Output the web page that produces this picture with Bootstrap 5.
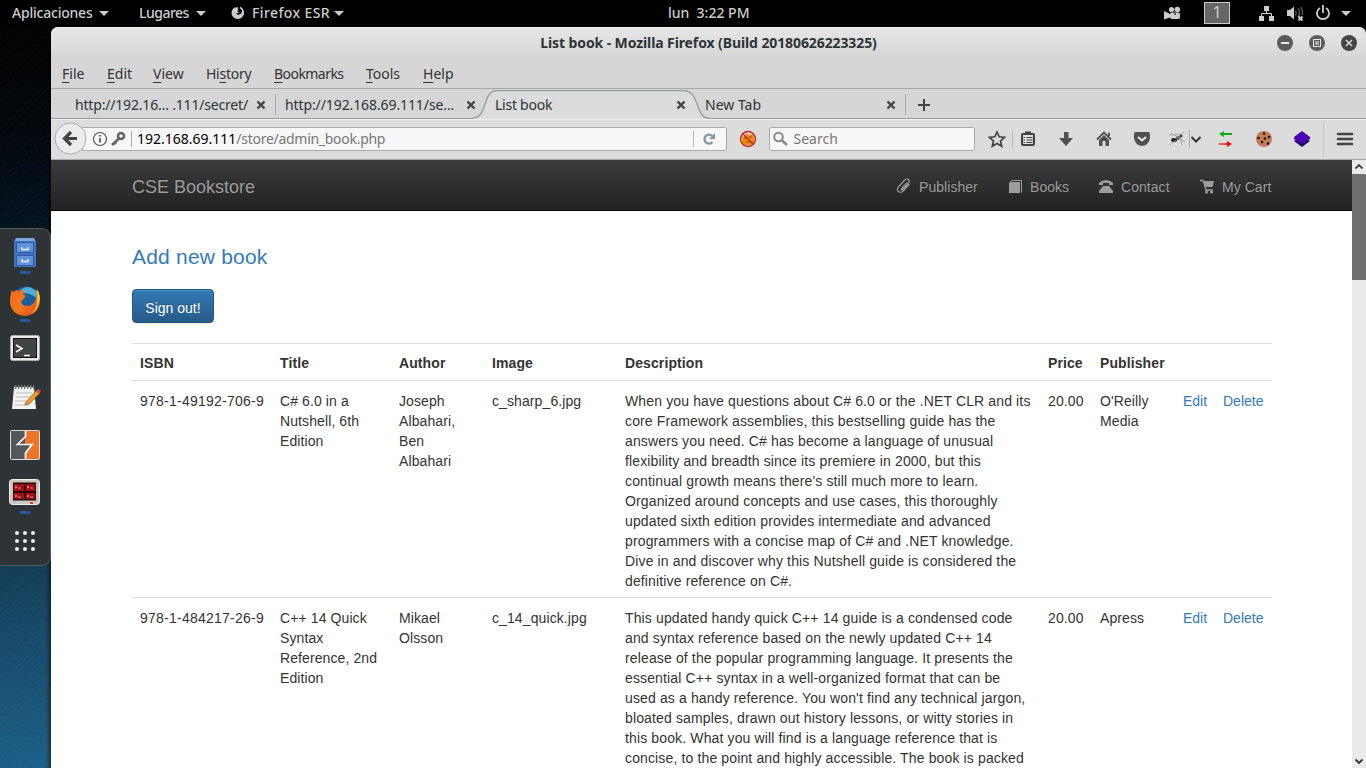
<!DOCTYPE html>
<html lang="en">
<head>
<meta charset="utf-8">
<title>List book</title>
<link href="https://cdn.jsdelivr.net/npm/bootstrap@5.3.0/dist/css/bootstrap.min.css" rel="stylesheet">
<style>
html,body{height:768px;width:1366px;overflow:hidden}
body{background:#000;font:14px/20px "Noto Sans","Open Sans",sans-serif;color:#2e3436;white-space:nowrap}
svg{display:block;flex:none}
.topbar{height:27px;background:#000;color:#ccc;font-weight:500}
.topbar span{line-height:26px}
.topbar .t1{width:82px;margin-left:12px;letter-spacing:-.22px}
.topbar .t2{width:52px;margin-left:29px;letter-spacing:-.5px}
.topbar .t3{width:78px;margin-left:7px;letter-spacing:.4px}
.clock{left:668px;top:0}
.ws{width:26px;height:22px;background:#666;border:1px solid #ccc;color:#ccc;font-size:16px;line-height:19px!important;text-align:center;font-weight:400}
.desk{height:741px}
.side{width:51px;background:linear-gradient(90deg,transparent 90%,rgba(0,0,0,.45)),repeating-linear-gradient(135deg,rgba(255,255,255,.02) 0 2px,transparent 2px 4px),linear-gradient(172deg,#000 0,#01060c 15%,#03121f 27%,#123c56 73%,#17496a 82%,#195578 92%,#1b5f88 100%);padding-top:201px}
.dockbox{height:338px;background:#2e3436;border:1px solid #555a5b;border-left:0;border-radius:0 9px 9px 0}
.win{width:1315px;border-radius:7px 7px 0 0;overflow:hidden;background:#d6d6d6}
.titlebar{height:31px;background:linear-gradient(#e6e6e6,#d6d6d6);border-top:1px solid #f6f6f6;font-weight:700}
.titlebar .cap{width:1315px;text-align:center;line-height:30px;letter-spacing:-.1px}
.winbtns{right:0;top:0}
.menus{height:31px;border-bottom:1px solid #a9a9a9;padding-left:11px;color:#333}
.menus span{line-height:32px}
.menus u{text-underline-offset:3px}
.tabs{height:30px;border-bottom:1px solid #999;padding-left:14px}
.tb-tab{width:210px;padding-left:10px;line-height:31px;position:relative}
.tb-tab>svg.x{position:absolute;left:191px;top:11px}
.tb-tab>svg.shape{position:absolute;left:-12px;top:1px}
.tb-tab>span{position:relative}
.tb-tab.sep::before{content:"";position:absolute;left:0;top:5px;height:21px;border-left:1px solid #aaa}
.tools{height:41px;background:#dcdcdc;border-top:1px solid #efefef;border-bottom:1px solid #a9a9a9;padding-bottom:2px}
.back{margin-left:3px;position:relative;z-index:1}
.url{margin-left:-5px;width:647px;height:24px;border:1px solid #aaa;border-radius:0 2px 2px 0;background:#f7f7f7}
.url .rest{color:#777;letter-spacing:-.28px}
.seek{width:206px;height:24px;border:1px solid #aaa;border-radius:2px;background:#f7f7f7;color:#777}
.view{height:608px;background:#fff}
.page{width:1301px;font-family:"Liberation Sans",Arial,sans-serif;color:#333;overflow:hidden}
.cse{height:51px;background:linear-gradient(#3c3c3c,#222);border-bottom:1px solid #080808;color:#9d9d9d;padding:0 80px 0 81px;text-shadow:0 -1px 0 rgba(0,0,0,.25)}
.cse .brand{font-size:18px;line-height:54px}
.cse .it{line-height:54px;letter-spacing:.05px}
.main{padding:0 80px 0 81px}
.addnew{font-size:21px;line-height:30px;margin-top:31px;color:#337ab7;letter-spacing:.2px}
.out{margin-top:17px;width:82px;height:34px;padding:4px 0 0;font-size:14px;line-height:29px;color:#fff;border:1px solid #245580;border-radius:4px;background:linear-gradient(#337ab7,#265a88);text-shadow:0 -1px 0 rgba(0,0,0,.2);box-shadow:inset 0 1px 0 rgba(255,255,255,.15),0 1px 1px rgba(0,0,0,.075)}
.books{margin-top:20px;width:1140px;table-layout:fixed;border-collapse:collapse}
.books td,.books th{padding:10px 0 6px 8px;border-top:1px solid #ddd;vertical-align:top;line-height:20px;letter-spacing:.1px}
.books th{padding:9px 0 7px 8px}
.books td:first-child{letter-spacing:.24px}
.books td:nth-child(5){letter-spacing:.135px}
.books td:nth-child(8),.books td:nth-child(9){letter-spacing:0}
.books a{color:#337ab7;text-decoration:none}
.scroller{width:14px;background:#ebebeb}
.thumb{height:106px;background:#707070}
</style>
</head>
<body>
<header class="topbar d-flex align-items-start position-relative">
  <span class="t1">Aplicaciones</span>
  <svg width="12" height="27" style="margin-left:4px"><path d="M1 11h10l-5 5z" fill="#ccc"/></svg>
  <span class="t2">Lugares</span>
  <svg width="12" height="27" style="margin-left:4px"><path d="M1 11h10l-5 5z" fill="#ccc"/></svg>
  <svg width="14" height="27" style="margin-left:24px" viewBox="0 0 14 27"><path d="M4 7.800A6 6 0 0 0 1.500 12.500a5.500 5.500 0 0 0 11 .5c0-3-1-4.500-3-5.500 1.500 1.500 2 3 1.200 5-1 2.500-4.500 3-5.700.7l2 .1 1-1.300-2-.7 1.500-1.200-.7-1.300L7 7z" fill="#ccc"/><path d="M9 7.600a5.500 5.500 0 1 1-5 .3" fill="none" stroke="#ccc" stroke-width="1.600"/></svg>
  <span class="t3">Firefox ESR</span>
  <svg width="12" height="27" style="margin-left:3px"><path d="M1 11h10l-5 5z" fill="#ccc"/></svg>
  <span class="clock position-absolute">lun&nbsp; 3:22 PM</span>
  <div class="d-flex ms-auto">
    <svg width="18" height="27" viewBox="0 0 18 27" fill="#ccc"><circle cx="7.500" cy="9.500" r="2.600"/><circle cx="13.300" cy="9.500" r="2.800"/><rect x="6" y="12.500" width="10" height="6.500" rx="2"/><path d="M0 11l6 3v3.500l-6 2z"/><path d="M9 14l3-1v2z" fill="#333"/></svg>
    <span class="ws" style="margin:2px 0 0 22px">1</span>
    <svg width="16" height="27" viewBox="0 0 16 27" style="margin-left:29px" fill="#ccc"><path d="M5 6h5v5H5zM0 16h5v5H0zM10 16h5v5h-5z"/><path d="M2.500 17v-3.500h10V17M7.500 10v4" stroke="#ccc" fill="none"/></svg>
    <svg width="18" height="27" viewBox="0 0 18 27" style="margin-left:12px"><path d="M0 10h3l4-3.500v13L3 16H0z" fill="#ccc"/><path d="M8.500 10.500q1.500 2.500 0 5M11 8.500q3 4.500 0 9M13.500 7q3 4 1.500 8" stroke="#555" stroke-width="1.400" fill="none"/><path d="M11.500 16.500l4 4m0-4l-4 4" stroke="#ccc" stroke-width="1.800"/></svg>
    <svg width="14" height="27" viewBox="0 0 14 27" style="margin-left:11px"><path d="M4 8a6 6 0 1 0 6 0M7 5v8" stroke="#ccc" stroke-width="1.800" fill="none"/></svg>
    <svg width="12" height="27" style="margin:0 14px 0 10px"><path d="M1 11h10l-5 5z" fill="#ccc"/></svg>
  </div>
</header>
<div class="desk d-flex">
  <aside class="side">
    <div class="dockbox">
      <svg width="50" height="336" viewBox="0 229 50 336">
        <defs><linearGradient id="fx" x1="0" y1="0" x2="1" y2="1"><stop offset="0" stop-color="#f26a1b"/><stop offset=".5" stop-color="#f47a1c"/><stop offset="1" stop-color="#d9471c"/></linearGradient></defs>
        <path d="M16 238h18l2 4H14z" fill="#7aa5e0"/><rect x="14" y="241" width="22" height="26" fill="#3f74c0"/><path d="M16.500 242.500h17v10h-17zM16.500 255.500h17v10h-17z" fill="#5f93dc" stroke="#2f5c9f"/><path d="M22 247v2.500h6V247M22 259v2.500h6V259" fill="none" stroke="#eee" stroke-width="1.300"/>
        <g fill="#2359a0"><path d="M20 271h10v3H20zM20 319h10v3H20zM20 511h10v3H20z"/></g>
        <circle cx="26" cy="300" r="13.500" fill="#1b5e9e"/><path d="M20 290q8-6 15 0 4 4 2 8l-7-4-6-1z" fill="#48b0df"/>
        <path d="M12 290l1 2q3-3 7-1 3-1 6-1-3 2-3 4l3 2-3 3q0 2-2 2 0 5 6 5 6 0 8-5 3-7 0-12 6 5 5 13-2 13-15 14-13-1-15-13 0-8 2-13z" fill="url(#fx)"/><path d="M37 289q4 6 2 14-2 8-8 11 6-5 6-12 1-7 0-13z" fill="#fbcf33"/>
        <rect x="10.500" y="335.500" width="29" height="25" rx="2" fill="#e8e8e8" stroke="#aaa"/><rect x="13.500" y="338.500" width="23" height="19" fill="#404444" stroke="#111"/><path d="M16 345l6 3.500-6 3.500M24 355.500h6" stroke="#fff" stroke-width="1.500" fill="none"/>
        <path d="M14 387h20l2 22H12z" fill="#f2f2ee"/><path d="M16 393h16M16 397h16M15 401h16M15 405h14" stroke="#bbb"/><path d="M15 387h19" stroke="#777" stroke-width="4" stroke-dasharray="1.500 1.500"/><path d="M26 402l11-12 3 3-11 11-4 1z" fill="#f09a2a" stroke="#9c5512" stroke-width=".7"/><path d="M36 391l2-2 3 2-2 3z" fill="#e0483c"/>
        <rect x="10.500" y="430.500" width="29" height="29" rx="1" fill="#555859"/><path d="M25 431h14.500v28.500H26V453l6-8.500H18l7-8z" fill="#ef7329"/><path d="M18.500 444l6.500-7.500v7.500z" fill="#555859"/><path d="M25.500 431v5.500l-8 8h14.500l-6.500 8.500v6.500" stroke="#fff" stroke-width="1.700" fill="none"/><rect x="10.500" y="430.500" width="29" height="29" rx="1" fill="none" stroke="#ddd"/>
        <rect x="9.500" y="479.500" width="30" height="25" rx="3" fill="#c9c9c2" stroke="#eee"/><rect x="13" y="482.500" width="23" height="18" fill="#2b0303"/><path d="M14 484h10v7H14zM26 484h9v7h-9zM14 493h10v6H14zM26 493h9v6h-9z" fill="#a51018"/><path d="M15 486l2 1-2 1m3 0h3M27 486l2 1-2 1m3 0h3M15 495l2 1-2 1m3 0h3M27 495l2 1-2 1m3 0h3" stroke="#f7a0a0" fill="none" stroke-width=".8"/><path d="M30 503h3" stroke="#e00" stroke-width="1.500"/>
        <g fill="#eee"><circle cx="17" cy="533" r="2"/><circle cx="25" cy="533" r="2"/><circle cx="33" cy="533" r="2"/><circle cx="17" cy="541" r="2"/><circle cx="25" cy="541" r="2"/><circle cx="33" cy="541" r="2"/><circle cx="17" cy="549" r="2"/><circle cx="25" cy="549" r="2"/><circle cx="33" cy="549" r="2"/></g>
      </svg>
    </div>
  </aside>
  <section class="win">
    <div class="titlebar position-relative">
      <div class="cap">List book - Mozilla Firefox (Build 20180626223325)</div>
      <svg class="winbtns position-absolute" width="92" height="30" viewBox="1274 28 92 30"><g fill="#5c5c5c"><circle cx="1285" cy="43" r="8"/><circle cx="1317" cy="43" r="8"/><circle cx="1349" cy="43" r="8" fill="#444"/></g><path d="M1281 43h8" stroke="#e6e6e6" stroke-width="2"/><rect x="1313.500" y="39.500" width="7" height="7" fill="none" stroke="#e6e6e6"/><rect x="1315" y="41" width="4" height="4" fill="#aaa"/><path d="M1346 40l6 6m0-6l-6 6" stroke="#ddd" stroke-width="1.500"/></svg>
    </div>
    <nav class="menus d-flex">
      <span style="width:45px"><u>F</u>ile</span><span style="width:46px"><u>E</u>dit</span><span style="width:53px"><u>V</u>iew</span><span style="width:68px;letter-spacing:-.25px">Hi<u>s</u>tory</span><span style="width:92px;letter-spacing:-.55px"><u>B</u>ookmarks</span><span style="width:57px"><u>T</u>ools</span><span><u>H</u>elp</span>
    </nav>
    <div class="tabs d-flex">
      <div class="tb-tab"><span style="letter-spacing:-.18px">http://192.16... .111/secret/</span><svg class="x" width="10" height="10"><path d="M1.500 1.500l7 7m0-7l-7 7" stroke="#444" stroke-width="2.400"/></svg></div>
      <div class="tb-tab sep"><span style="letter-spacing:-.1px">http://192.168.69.111/se...</span><svg class="x" width="10" height="10"><path d="M1.500 1.500l7 7m0-7l-7 7" stroke="#444" stroke-width="2.400"/></svg></div>
      <div class="tb-tab"><svg class="shape" width="236" height="29" viewBox="0 0 236 29"><path d="M0 28.500C15 28.500 9 .5 22 .5H212C229 .5 221 28.500 236 28.500V30H0z" fill="#dcdcdc"/><path d="M0 28C15 28 9 .5 24 .5H210C228 .5 221 28 236 28" fill="none" stroke="#949ba2" stroke-width="1.300"/></svg><span style="letter-spacing:-.25px">List book</span><svg class="x" width="10" height="10"><path d="M1.500 1.500l7 7m0-7l-7 7" stroke="#444" stroke-width="2.400"/></svg></div>
      <div class="tb-tab"><span>New Tab</span><svg class="x" width="10" height="10"><path d="M1.500 1.500l7 7m0-7l-7 7" stroke="#444" stroke-width="2.400"/></svg></div>
      <div class="tb-tab sep"><svg width="20" height="29"><path d="M3 16h12M9 10v12" stroke="#444" stroke-width="2"/></svg></div>
    </div>
    <div class="tools d-flex align-items-center">
      <svg class="back" width="33" height="33" viewBox="0 0 33 33"><circle cx="16.500" cy="16.500" r="15.500" fill="#ececec" stroke="#aaa"/><path d="M17 10l-6.500 6.500L17 23M11.500 16.500H23" stroke="#444" stroke-width="3.200" fill="none"/></svg>
      <div class="url d-flex align-items-center">
        <svg width="54" height="22" viewBox="83 128 54 22"><circle cx="100" cy="139" r="6.500" fill="none" stroke="#555" stroke-width="1.200"/><path d="M100 138v4.500M100 135v1.500" stroke="#555" stroke-width="1.700"/><circle cx="121" cy="136" r="3" fill="none" stroke="#666" stroke-width="2.600"/><path d="M119 138.500l-7 6.500M114 142l2 2" stroke="#666" stroke-width="2.600"/><path d="M131.500 131v16" stroke="#aaa"/></svg>
        <span class="host" style="color:#000">192.168.69.111</span><span class="rest">/store/admin_book.php</span>
        <svg class="ms-auto" width="33" height="22" viewBox="0 0 33 22"><path d="M.5 3v16" stroke="#bbb"/><path d="M19.500 14a4.500 4.500 0 1 1 .5-5" stroke="#8297a8" stroke-width="2.300" fill="none"/><path d="M22 5v6h-6z" fill="#8297a8"/></svg>
      </div>
      <svg width="42" height="28" viewBox="727 125 42 28"><path d="M742 137l3-1 1-3 3 2 4-1 1 4 1 5-5 2-5 0-4-2 1-3z" fill="#ef8b0d"/><path d="M744 138h3m2-1h3m-6 5h5" stroke="#7c520d"/><circle cx="748" cy="139" r="7.500" fill="none" stroke="#c91c24" stroke-width="1.300"/><path d="M742.500 133.500l11 11" stroke="#c91c24" stroke-width="1.300"/></svg>
      <div class="seek d-flex align-items-center"><svg width="23" height="22" viewBox="0 0 23 22"><circle cx="8.500" cy="9" r="4.300" fill="none" stroke="#888" stroke-width="2"/><path d="M12 12.500l5 4.500" stroke="#888" stroke-width="2.500"/></svg><span>Search</span></div>
      <svg style="margin-left:10px" width="24" height="28" viewBox="985 125 24 28"><path d="M997 132l2.200 4.800 5.300.6-4 3.600 1.200 5.200-4.700-2.700-4.700 2.700 1.200-5.200-4-3.600 5.300-.6z" fill="none" stroke="#444" stroke-width="1.700"/></svg>
      <svg width="38" height="28" viewBox="1009 125 38 28"><path d="M1012.500 130v18" stroke="#bbb"/><rect x="1022" y="134" width="12" height="11" rx="1" fill="#dcdcdc" stroke="#444" stroke-width="2"/><path d="M1025 133.500v-2h6v2z" fill="#444"/><path d="M1023.500 137.500h1.500m1.500 0h6M1023.500 140h1.500m1.500 0h6M1023.500 142.500h1.500m1.500 0h6" stroke="#444" stroke-width="1.200"/></svg>
      <svg width="38" height="28" viewBox="1047 125 38 28"><path d="M1064 132h4.500v6h4.500l-7 8-7-8h5z" fill="#505050"/></svg>
      <svg width="38" height="28" viewBox="1085 125 38 28"><path d="M1097 139.500l7-7 7 7M1109 136v-3.500" stroke="#505050" stroke-width="1.800" fill="none"/><path d="M1099 140l5-5 5 5v6h-3.500v-5h-3v5h-3.500z" fill="#505050"/></svg>
      <svg width="38" height="28" viewBox="1123 125 38 28"><path d="M1134 134q0-2 2-2h12q2 0 2 2v4q-1 7-8 8-7-1-8-8z" fill="#505050"/><path d="M1138 137l4 3.500 4-3.500" stroke="#e8e8e8" stroke-width="2" fill="none"/></svg>
      <svg width="45" height="28" viewBox="1161 125 45 28"><ellipse cx="1174" cy="140" rx="3" ry="2" fill="#222"/><circle cx="1178" cy="138" r="2" fill="#555"/><circle cx="1181" cy="136" r="1.500" fill="#333"/><path d="M1169 135l12-1M1171 133l7 4M1170 145l6-5M1178 138l7 4M1180 137l2 8M1179 136l5-4" stroke="#999" stroke-width=".8"/><path d="M1189.500 130v18" stroke="#aaa"/><path d="M1191.500 137l4.500 4.500 4.500-4.500" stroke="#333" stroke-width="2" fill="none"/></svg>
      <svg width="38" height="28" viewBox="1206 125 38 28"><path d="M1221 134h11" stroke="#10ad10" stroke-width="2"/><path d="M1219 134l5-3v6z" fill="#10ad10"/><path d="M1219 144h11" stroke="#f65050" stroke-width="2"/><path d="M1232 144l-5-3v6z" fill="#f00"/></svg>
      <svg width="38" height="28" viewBox="1244 125 38 28"><circle cx="1264" cy="139" r="8" fill="#c67c52"/><g fill="#111"><circle cx="1264" cy="133.500" r="1.200"/><circle cx="1269" cy="137" r="1.300"/><circle cx="1258.500" cy="138" r="1.300"/><circle cx="1265" cy="138.500" r="1.300"/><circle cx="1262" cy="142" r="1.300"/><circle cx="1268" cy="143.500" r="1.300"/></g></svg>
      <svg width="38" height="28" viewBox="1282 125 38 28"><path d="M1294 141l8-4 8 4-8 6z" fill="#220069"/><path d="M1294 137l8-6 8 6v2l-8 5-8-5z" fill="#4800b0"/></svg>
      <svg width="46" height="38" viewBox="1320 120 46 38"><path d="M1323.500 121v36" stroke="#c4c4c4"/><path d="M1338 134h14M1338 139h14M1338 144h14" stroke="#444" stroke-width="2.600" stroke-linecap="round"/></svg>
    </div>
    <div class="view d-flex">
      <div class="page">
        <nav class="cse d-flex">
          <span class="brand">CSE Bookstore</span>
          <svg class="ms-auto" width="24" height="51" viewBox="896 160 24 51"><g transform="rotate(-3 904 186)"><path d="M907 183l-5.500 5.500q-1 2 1 1l6-6q2-2.500 0-4-2-1-4 1l-6 6q-2.500 3 0 5 2.500 1.500 5-1l6-6" fill="none" stroke="#9d9d9d" stroke-width="1.200"/></g></svg><span class="it" style="width:89px;margin-left:-1px">Publisher</span>
          <svg width="22" height="51" viewBox="1008 160 22 51"><path d="M1009 183l3-3h10v12l-1 1v-12h-9l-1 1h9v11h-11z" fill="#9d9d9d"/></svg><span class="it" style="width:68px">Books</span>
          <svg width="23" height="51" viewBox="1098 160 23 51"><path d="M1099 185v-2q3-3 7-3t7 3v2h-4v-2h-6v2zM1103 186h6l4 5v2h-14v-2z" fill="#9d9d9d"/></svg><span class="it" style="width:78px">Contact</span>
          <svg width="23" height="51" viewBox="1199 160 23 51"><path d="M1200 180.500h3l3 9.500h7" fill="none" stroke="#9d9d9d" stroke-width="1.300"/><path d="M1203.500 181h10.500l-1.500 6h-7z" fill="#9d9d9d"/><circle cx="1206.500" cy="192" r="1.500" fill="#9d9d9d"/><circle cx="1211.500" cy="192" r="1.500" fill="#9d9d9d"/></svg><span class="it" style="width:50px">My Cart</span>
        </nav>
        <main class="main">
          <div class="addnew">Add new book</div>
          <a class="btn out d-block">Sign out!</a>
          <table class="books">
            <colgroup><col style="width:140px"><col style="width:119px"><col style="width:93px"><col style="width:133px"><col style="width:423px"><col style="width:52px"><col style="width:83px"><col style="width:40px"><col style="width:57px"></colgroup>
            <tr><th>ISBN</th><th>Title</th><th>Author</th><th>Image</th><th>Description</th><th>Price</th><th>Publisher</th><th></th><th></th></tr>
            <tr><td>978-1-49192-706-9</td><td>C# 6.0 in a<br>Nutshell, 6th<br>Edition</td><td>Joseph<br>Albahari,<br>Ben<br>Albahari</td><td>c_sharp_6.jpg</td><td>When you have questions about C# 6.0 or the .NET CLR and its<br>core Framework assemblies, this bestselling guide has the<br>answers you need. C# has become a language of unusual<br>flexibility and breadth since its premiere in 2000, but this<br>continual growth means there's still much more to learn.<br>Organized around concepts and use cases, this thoroughly<br>updated sixth edition provides intermediate and advanced<br>programmers with a concise map of C# and .NET knowledge.<br>Dive in and discover why this Nutshell guide is considered the<br>definitive reference on C#.</td><td>20.00</td><td>O'Reilly<br>Media</td><td><a href="#">Edit</a></td><td><a href="#">Delete</a></td></tr>
            <tr><td>978-1-484217-26-9</td><td>C++ 14 Quick<br>Syntax<br>Reference, 2nd<br>Edition</td><td>Mikael<br>Olsson</td><td>c_14_quick.jpg</td><td>This updated handy quick C++ 14 guide is a condensed code<br>and syntax reference based on the newly updated C++ 14<br>release of the popular programming language. It presents the<br>essential C++ syntax in a well-organized format that can be<br>used as a handy reference. You won't find any technical jargon,<br>bloated samples, drawn out history lessons, or witty stories in<br>this book. What you will find is a language reference that is<br>concise, to the point and highly accessible. The book is packed</td><td>20.00</td><td>Apress</td><td><a href="#">Edit</a></td><td><a href="#">Delete</a></td></tr>
          </table>
        </main>
      </div>
      <div class="scroller">
        <svg width="14" height="14"><path d="M3.500 8.500L7 5l3.500 3.500" stroke="#444" stroke-width="1.800" fill="none"/></svg>
        <div class="thumb"></div>
        <svg width="14" height="488"><path d="M3.500 479.500L7 483l3.500-3.500" stroke="#333" stroke-width="1.800" fill="none"/></svg>
      </div>
    </div>
  </section>
</div>
<script src="https://cdn.jsdelivr.net/npm/bootstrap@5.3.0/dist/js/bootstrap.bundle.min.js"></script>
</body>
</html>
